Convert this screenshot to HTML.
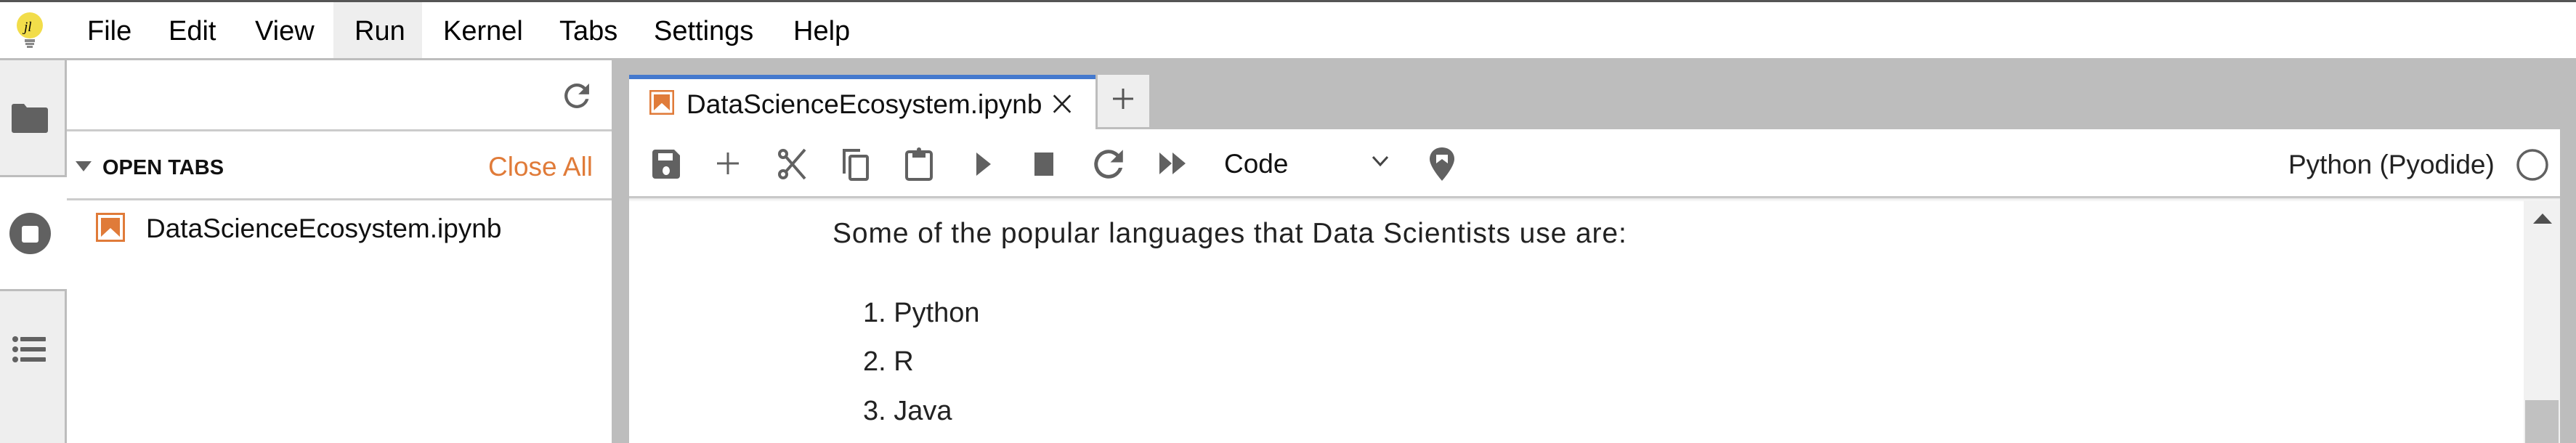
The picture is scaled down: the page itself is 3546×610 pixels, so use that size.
<!DOCTYPE html>
<html><head><meta charset="utf-8"><style>
*{margin:0;padding:0;box-sizing:border-box}
body{width:3546px;height:610px;overflow:hidden;background:#fff;font-family:"Liberation Sans",sans-serif;color:#000;position:relative}
.a{position:absolute}
.t{white-space:nowrap;line-height:1}
svg{position:absolute}
</style></head><body>
<!-- menu bar -->
<div class="a" style="left:0;top:0;width:3546px;height:3px;background:#555"></div>
<div class="a" style="left:0;top:80px;width:3546px;height:3px;background:#bdbdbd"></div>
<div class="a" style="left:459px;top:3px;width:122px;height:77px;background:#eee"></div>
<svg style="left:21px;top:17px" width="40" height="50" viewBox="0 0 40 50"><circle cx="20" cy="18" r="18" fill="#f2dd4a"/><rect x="13" y="37" width="14" height="4" fill="#888"/><rect x="14" y="42" width="12" height="3" fill="#888"/><rect x="16" y="46" width="8" height="3" fill="#888"/><text x="12" y="26" font-size="19" font-style="italic" font-family="Liberation Serif">jl</text></svg>
<div class="a t" style="left:120px;top:24px;font-size:38px">File</div>
<div class="a t" style="left:232px;top:24px;font-size:38px">Edit</div>
<div class="a t" style="left:351px;top:24px;font-size:38px">View</div>
<div class="a t" style="left:488px;top:24px;font-size:38px">Run</div>
<div class="a t" style="left:610px;top:24px;font-size:38px">Kernel</div>
<div class="a t" style="left:770px;top:24px;font-size:38px">Tabs</div>
<div class="a t" style="left:900px;top:24px;font-size:38px">Settings</div>
<div class="a t" style="left:1092px;top:24px;font-size:38px">Help</div>
<!-- activity bar -->
<div class="a" style="left:0;top:83px;width:91px;height:527px;background:#eee"></div>
<div class="a" style="left:0;top:241px;width:92px;height:160px;background:#fff;border-top:3px solid #bdbdbd;border-bottom:3px solid #bdbdbd"></div>
<div class="a" style="left:89px;top:83px;width:3px;height:158px;background:#bdbdbd"></div>
<div class="a" style="left:89px;top:401px;width:3px;height:209px;background:#bdbdbd"></div>
<svg style="left:16px;top:143px" width="50" height="40" viewBox="0 0 50 40"><path d="M3 0h14l4 5h26a3 3 0 0 1 3 3v29a3 3 0 0 1-3 3H3a3 3 0 0 1-3-3V3a3 3 0 0 1 3-3z" fill="#616161"/></svg>
<svg style="left:13px;top:293px" width="57" height="57" viewBox="0 0 57 57"><circle cx="28.5" cy="28.5" r="28.5" fill="#616161"/><rect x="17" y="18" width="23" height="23" rx="3" fill="#fff"/></svg>
<svg style="left:17px;top:463px" width="46" height="36" viewBox="0 0 46 36"><g fill="#616161"><circle cx="4" cy="4" r="4"/><circle cx="4" cy="18" r="4"/><circle cx="4" cy="32" r="4"/><rect x="11" y="1" width="35" height="6" rx="1"/><rect x="11" y="15" width="35" height="6" rx="1"/><rect x="11" y="29" width="35" height="6" rx="1"/></g></svg>
<!-- side panel -->
<div class="a" style="left:92px;top:178px;width:750px;height:3px;background:#ccc"></div>
<svg style="left:776px;top:114px" width="36" height="36" viewBox="3.5 3.5 17 17"><path d="M17.65 6.35A7.96 7.96 0 0 0 12 4a8 8 0 1 0 7.75 10h-2.08A6 6 0 1 1 12 6c1.66 0 3.14.69 4.22 1.78L13 11h7V4z" fill="#616161"/></svg>
<svg style="left:104px;top:222px" width="22" height="16" viewBox="0 0 22 16"><path d="M0 0h22L11 14z" fill="#616161"/></svg>
<div class="a t" style="left:141px;top:217px;font-size:29px;font-weight:bold;color:#111">OPEN TABS</div>
<div class="a t" style="left:672px;top:211px;font-size:37px;color:#e07b39">Close All</div>
<div class="a" style="left:92px;top:273px;width:750px;height:3px;background:#ccc"></div>
<svg style="left:132px;top:293px" width="40" height="40" viewBox="0 0 40 40"><rect x="1.5" y="1.5" width="37" height="37" fill="#fff" stroke="#e07b39" stroke-width="3"/><path d="M7 7h26v26l-13-12L7 33z" fill="#e07b39"/></svg>
<div class="a t" style="left:201px;top:296px;font-size:37px;color:#111">DataScienceEcosystem.ipynb</div>
<!-- main gray -->
<div class="a" style="left:842px;top:83px;width:2704px;height:527px;background:#bdbdbd"></div>
<!-- tab -->
<div class="a" style="left:866px;top:103px;width:642px;height:76px;background:#fff;border-top:6px solid #4479ce"></div>
<svg style="left:894px;top:123px" width="34" height="36" viewBox="0 0 40 40"><rect x="1.5" y="1.5" width="37" height="37" fill="#fff" stroke="#e07b39" stroke-width="3"/><path d="M7 7h26v26l-13-12L7 33z" fill="#e07b39"/></svg>
<div class="a t" style="left:945px;top:125px;font-size:37px;color:#111">DataScienceEcosystem.ipynb</div>
<svg style="left:1448px;top:128px" width="28" height="30" viewBox="0 0 31 32"><path d="M3 3l25 26M28 3L3 29" stroke="#222" stroke-width="3"/></svg>
<div class="a" style="left:1511px;top:103px;width:71px;height:72px;background:#eee"></div>
<svg style="left:1530px;top:120px" width="32" height="32" viewBox="0 0 32 32"><path d="M16 2v28M2 16h28" stroke="#555" stroke-width="3"/></svg>
<!-- notebook panel -->
<div class="a" style="left:866px;top:178px;width:2658px;height:432px;background:#fff"></div>
<div class="a" style="left:866px;top:270px;width:2658px;height:3px;background:#c8c8c8"></div>
<div class="a" style="left:866px;top:273px;width:2658px;height:5px;background:linear-gradient(#e8e8e8,#fff)"></div>
<!-- toolbar icons -->
<svg style="left:898px;top:206px" width="38" height="40" viewBox="0 0 38 40"><path d="M4 0h26l8 8v28a4 4 0 0 1-4 4H4a4 4 0 0 1-4-4V4a4 4 0 0 1 4-4z" fill="#616161"/><rect x="8" y="5" width="20" height="10" fill="#fff"/><ellipse cx="19" cy="29" rx="5" ry="6" fill="#fff"/></svg>
<svg style="left:986px;top:209px" width="32" height="32" viewBox="0 0 32 32"><path d="M16 1v30M1 16h30" stroke="#616161" stroke-width="3"/></svg>
<svg style="left:1070px;top:204px" width="42" height="44" viewBox="0 0 42 44"><g fill="none" stroke="#616161" stroke-width="4"><circle cx="8" cy="8" r="5"/><circle cx="8" cy="36" r="5"/><path d="M12 12l26 30M12 32l26-30"/></g></svg>
<svg style="left:1158px;top:203px" width="40" height="46" viewBox="0 0 40 46"><g fill="none" stroke="#616161" stroke-width="4"><path d="M4 36V4h22"/><rect x="12" y="12" width="24" height="32" rx="2"/></g></svg>
<svg style="left:1246px;top:203px" width="38" height="46" viewBox="0 0 38 46"><g fill="none" stroke="#616161" stroke-width="4"><rect x="2" y="6" width="34" height="38" rx="3"/></g><rect x="10" y="4" width="18" height="10" fill="#616161"/><circle cx="19" cy="3" r="3" fill="#616161"/></svg>
<svg style="left:1342px;top:208px" width="24" height="36" viewBox="0 0 24 36"><path d="M2 2l20 16L2 34z" fill="#616161"/></svg>
<svg style="left:1424px;top:210px" width="26" height="32" viewBox="0 0 26 32"><rect width="26" height="32" fill="#616161"/></svg>
<svg style="left:1505px;top:204px" width="42" height="44" viewBox="3.5 3.5 17 17"><path d="M17.65 6.35A7.96 7.96 0 0 0 12 4a8 8 0 1 0 7.75 10h-2.08A6 6 0 1 1 12 6c1.66 0 3.14.69 4.22 1.78L13 11h7V4z" fill="#616161"/></svg>
<svg style="left:1596px;top:210px" width="36" height="30" viewBox="0 0 36 30"><path d="M0 0l17 15L0 30zM18 0l18 15-18 15z" fill="#616161"/></svg>
<div class="a t" style="left:1685px;top:207px;font-size:37px;color:#111">Code</div>
<svg style="left:1888px;top:214px" width="24" height="16" viewBox="0 0 24 16"><path d="M2 2l10 11L22 2" fill="none" stroke="#444" stroke-width="3"/></svg>
<svg style="left:1968px;top:203px" width="34" height="46" viewBox="0 0 34 46"><path d="M17 0C7 0 0 7 0 16c0 11 17 30 17 30s17-19 17-30C34 7 27 0 17 0z" fill="#616161"/><path d="M9 10h16v12l-8-6-8 6z" fill="#fff"/></svg>
<div class="a t" style="left:3150px;top:208px;font-size:37px;color:#222">Python (Pyodide)</div>
<svg style="left:3463px;top:204px" width="46" height="46" viewBox="0 0 46 46"><circle cx="23" cy="23" r="20" fill="none" stroke="#616161" stroke-width="3.5"/></svg>
<!-- scrollbar -->
<div class="a" style="left:3474px;top:276px;width:50px;height:334px;background:#f1f1f1"></div>
<svg style="left:3487px;top:294px" width="26" height="14" viewBox="0 0 26 14"><path d="M13 0L26 14H0z" fill="#505050"/></svg>
<div class="a" style="left:3476px;top:551px;width:46px;height:59px;background:#c1c1c1"></div>
<!-- content -->
<div class="a t" style="left:1146px;top:302px;font-size:39px;letter-spacing:0.9px;color:#222">Some of the popular languages that Data Scientists use are:</div>
<div class="a t" style="left:1188px;top:412px;font-size:38px;color:#222">1. Python</div>
<div class="a t" style="left:1188px;top:479px;font-size:38px;color:#222">2. R</div>
<div class="a t" style="left:1188px;top:547px;font-size:38px;color:#222">3. Java</div>
</body></html>
